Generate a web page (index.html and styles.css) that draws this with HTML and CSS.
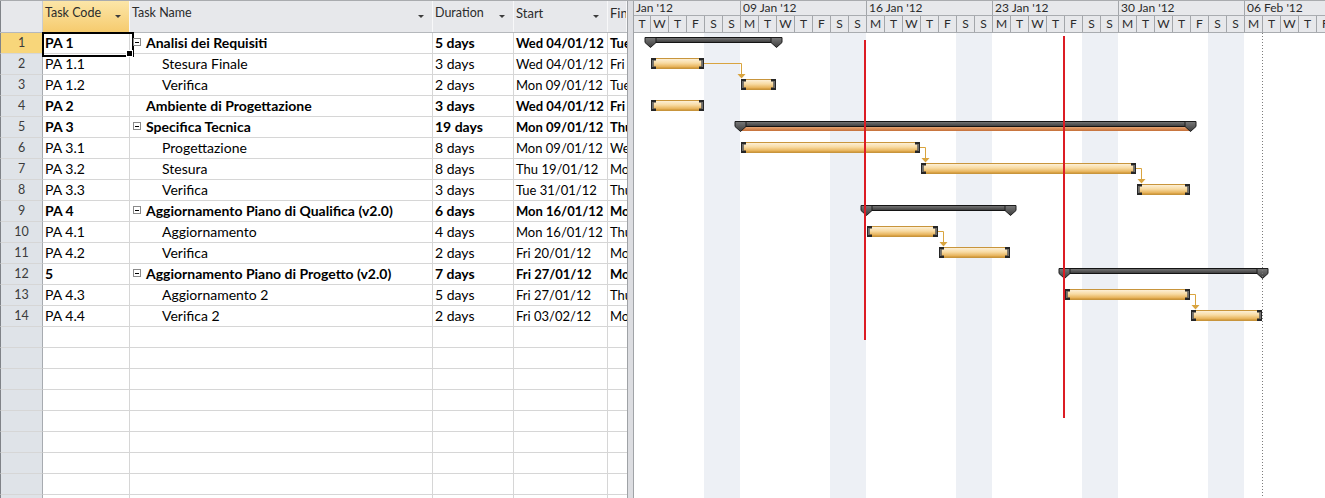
FILE: index.html
```html
<!DOCTYPE html>
<html>
<head>
<meta charset="utf-8">
<link rel="stylesheet" href="styles.css">
</head>
<body>
<div class="app">
  <div class="grid">
    <div class="row head">
      <div class="c num"></div>
      <div class="c hd sel"><span>Task Code</span><i class="dd"></i></div>
      <div class="c hd"><span>Task Name</span><i class="dd"></i></div>
      <div class="c hd"><span>Duration</span><i class="dd"></i></div>
      <div class="c hd"><span>Start</span><i class="dd"></i></div>
      <div class="c hd"><span>Finish</span></div>
    </div>
    <div class="row b">
      <div class="c num cur">1</div><div class="c code active">PA 1</div>
      <div class="c name"><i class="tog"></i>Analisi dei Requisiti</div>
      <div class="c">5 days</div><div class="c">Wed 04/01/12</div><div class="c">Tue 10/01/12</div>
    </div>
    <div class="row">
      <div class="c num">2</div><div class="c">PA 1.1</div>
      <div class="c name l2">Stesura Finale</div>
      <div class="c">3 days</div><div class="c">Wed 04/01/12</div><div class="c">Fri 06/01/12</div>
    </div>
    <div class="row">
      <div class="c num">3</div><div class="c">PA 1.2</div>
      <div class="c name l2">Verifica</div>
      <div class="c">2 days</div><div class="c">Mon 09/01/12</div><div class="c">Tue 10/01/12</div>
    </div>
    <div class="row b">
      <div class="c num">4</div><div class="c">PA 2</div>
      <div class="c name l1">Ambiente di Progettazione</div>
      <div class="c">3 days</div><div class="c">Wed 04/01/12</div><div class="c">Fri 06/01/12</div>
    </div>
    <div class="row b">
      <div class="c num">5</div><div class="c">PA 3</div>
      <div class="c name"><i class="tog"></i>Specifica Tecnica</div>
      <div class="c">19 days</div><div class="c">Mon 09/01/12</div><div class="c">Thu 02/02/12</div>
    </div>
    <div class="row">
      <div class="c num">6</div><div class="c">PA 3.1</div>
      <div class="c name l2">Progettazione</div>
      <div class="c">8 days</div><div class="c">Mon 09/01/12</div><div class="c">Wed 18/01/12</div>
    </div>
    <div class="row">
      <div class="c num">7</div><div class="c">PA 3.2</div>
      <div class="c name l2">Stesura</div>
      <div class="c">8 days</div><div class="c">Thu 19/01/12</div><div class="c">Mon 30/01/12</div>
    </div>
    <div class="row">
      <div class="c num">8</div><div class="c">PA 3.3</div>
      <div class="c name l2">Verifica</div>
      <div class="c">3 days</div><div class="c">Tue 31/01/12</div><div class="c">Thu 02/02/12</div>
    </div>
    <div class="row b">
      <div class="c num">9</div><div class="c">PA 4</div>
      <div class="c name"><i class="tog"></i>Aggiornamento Piano di Qualifica (v2.0)</div>
      <div class="c">6 days</div><div class="c">Mon 16/01/12</div><div class="c">Mon 23/01/12</div>
    </div>
    <div class="row">
      <div class="c num">10</div><div class="c">PA 4.1</div>
      <div class="c name l2">Aggiornamento</div>
      <div class="c">4 days</div><div class="c">Mon 16/01/12</div><div class="c">Thu 19/01/12</div>
    </div>
    <div class="row">
      <div class="c num">11</div><div class="c">PA 4.2</div>
      <div class="c name l2">Verifica</div>
      <div class="c">2 days</div><div class="c">Fri 20/01/12</div><div class="c">Mon 23/01/12</div>
    </div>
    <div class="row b">
      <div class="c num">12</div><div class="c">5</div>
      <div class="c name"><i class="tog"></i>Aggiornamento Piano di Progetto (v2.0)</div>
      <div class="c">7 days</div><div class="c">Fri 27/01/12</div><div class="c">Mon 06/02/12</div>
    </div>
    <div class="row">
      <div class="c num">13</div><div class="c">PA 4.3</div>
      <div class="c name l2">Aggiornamento 2</div>
      <div class="c">5 days</div><div class="c">Fri 27/01/12</div><div class="c">Thu 02/02/12</div>
    </div>
    <div class="row">
      <div class="c num">14</div><div class="c">PA 4.4</div>
      <div class="c name l2">Verifica 2</div>
      <div class="c">2 days</div><div class="c">Fri 03/02/12</div><div class="c">Mon 06/02/12</div>
    </div>
    <div class="row"><div class="c num"></div><div class="c"></div><div class="c"></div><div class="c"></div><div class="c"></div><div class="c"></div></div>
    <div class="row"><div class="c num"></div><div class="c"></div><div class="c"></div><div class="c"></div><div class="c"></div><div class="c"></div></div>
    <div class="row"><div class="c num"></div><div class="c"></div><div class="c"></div><div class="c"></div><div class="c"></div><div class="c"></div></div>
    <div class="row"><div class="c num"></div><div class="c"></div><div class="c"></div><div class="c"></div><div class="c"></div><div class="c"></div></div>
    <div class="row"><div class="c num"></div><div class="c"></div><div class="c"></div><div class="c"></div><div class="c"></div><div class="c"></div></div>
    <div class="row"><div class="c num"></div><div class="c"></div><div class="c"></div><div class="c"></div><div class="c"></div><div class="c"></div></div>
    <div class="row"><div class="c num"></div><div class="c"></div><div class="c"></div><div class="c"></div><div class="c"></div><div class="c"></div></div>
    <div class="row"><div class="c num"></div><div class="c"></div><div class="c"></div><div class="c"></div><div class="c"></div><div class="c"></div></div>
    <div class="row"><div class="c num"></div><div class="c"></div><div class="c"></div><div class="c"></div><div class="c"></div><div class="c"></div></div>
  </div>
  <div class="split"></div>
  <div class="gantt">
    <div class="tiers">
      <div class="tier top">
        <span>Jan '12</span><span>09 Jan '12</span><span>16 Jan '12</span><span>23 Jan '12</span><span>30 Jan '12</span><span>06 Feb '12</span>
      </div>
      <div class="tier bot">
        <span>T</span><span>W</span><span>T</span><span>F</span><span>S</span><span>S</span><span>M</span>
        <span>T</span><span>W</span><span>T</span><span>F</span><span>S</span><span>S</span><span>M</span>
        <span>T</span><span>W</span><span>T</span><span>F</span><span>S</span><span>S</span><span>M</span>
        <span>T</span><span>W</span><span>T</span><span>F</span><span>S</span><span>S</span><span>M</span>
        <span>T</span><span>W</span><span>T</span><span>F</span><span>S</span><span>S</span><span>M</span>
        <span>T</span><span>W</span><span>T</span><span>F</span>
      </div>
    </div>
    <svg class="chart" width="691" height="465" viewBox="0 0 691 465" xmlns="http://www.w3.org/2000/svg">
      <defs>
        <linearGradient id="tg" x1="0" y1="0" x2="0" y2="1">
          <stop offset="0" stop-color="#fdf2dc"/>
          <stop offset="0.45" stop-color="#f8dba3"/>
          <stop offset="0.8" stop-color="#e8b660"/>
          <stop offset="1" stop-color="#c98e2e"/>
        </linearGradient>
        <linearGradient id="sg" x1="0" y1="0" x2="0" y2="1">
          <stop offset="0" stop-color="#7a7a7a"/>
          <stop offset="1" stop-color="#3a3a3a"/>
        </linearGradient>
        <linearGradient id="og" x1="0" y1="0" x2="0" y2="1">
          <stop offset="0" stop-color="#f1b483"/>
          <stop offset="1" stop-color="#c46f38"/>
        </linearGradient>
        <g id="cl"><path d="M0 0H5V2.5H2.5V8.5H5V11H0Z" fill="#262626"/><rect x="1" y="2" width="1.5" height="7" fill="#6e6e6e"/></g>
        <g id="cr"><path d="M0 0H5V11H0V8.5H2.5V2.5H0Z" fill="#262626"/><rect x="2.5" y="2" width="1.5" height="7" fill="#6e6e6e"/></g>
        <path id="pt" d="M-5.5 0.5H5.5V5.5L0 10.5L-5.5 5.5Z" fill="url(#sg)" stroke="#1c1c1c"/>
      </defs>
      <g fill="#edf0f5">
        <rect x="70" y="0" width="36" height="465"/>
        <rect x="196" y="0" width="36" height="465"/>
        <rect x="322" y="0" width="36" height="465"/>
        <rect x="448" y="0" width="36" height="465"/>
        <rect x="574" y="0" width="36" height="465"/>
      </g>
      <g fill="none" stroke="#d9a43f">
        <path d="M70 30.5H107.5V41"/>
        <path d="M286 114.5H291.5V125"/>
        <path d="M502 135.5H507.5V146"/>
        <path d="M304 198.5H309.5V209"/>
        <path d="M556 261.5H561.5V272"/>
      </g>
      <g fill="#d9a43f">
        <path d="M103.5 41H111.5L107.5 45.5Z"/>
        <path d="M287.5 125H295.5L291.5 129.5Z"/>
        <path d="M503.5 146H511.5L507.5 150.5Z"/>
        <path d="M305.5 209H313.5L309.5 213.5Z"/>
        <path d="M557.5 272H565.5L561.5 276.5Z"/>
      </g>
      <g fill="url(#tg)" stroke="#c8953c">
        <rect x="17.5" y="25.5" width="52" height="10"/>
        <rect x="107.5" y="46.5" width="34" height="10"/>
        <rect x="17.5" y="67.5" width="52" height="10"/>
        <rect x="107.5" y="109.5" width="178" height="10"/>
        <rect x="287.5" y="130.5" width="214" height="10"/>
        <rect x="503.5" y="151.5" width="52" height="10"/>
        <rect x="233.5" y="193.5" width="70" height="10"/>
        <rect x="305.5" y="214.5" width="70" height="10"/>
        <rect x="431.5" y="256.5" width="124" height="10"/>
        <rect x="557.5" y="277.5" width="70" height="10"/>
      </g>
      <use href="#cl" x="17" y="25"/><use href="#cr" x="65" y="25"/>
      <use href="#cl" x="107" y="46"/><use href="#cr" x="137" y="46"/>
      <use href="#cl" x="17" y="67"/><use href="#cr" x="65" y="67"/>
      <use href="#cl" x="107" y="109"/><use href="#cr" x="281" y="109"/>
      <use href="#cl" x="287" y="130"/><use href="#cr" x="497" y="130"/>
      <use href="#cl" x="503" y="151"/><use href="#cr" x="551" y="151"/>
      <use href="#cl" x="233" y="193"/><use href="#cr" x="299" y="193"/>
      <use href="#cl" x="305" y="214"/><use href="#cr" x="371" y="214"/>
      <use href="#cl" x="431" y="256"/><use href="#cr" x="551" y="256"/>
      <use href="#cl" x="557" y="277"/><use href="#cr" x="623" y="277"/>
      <rect x="106" y="93" width="451" height="5" fill="url(#og)"/>
      <g fill="url(#sg)" stroke="#141414">
        <rect x="16.5" y="4.5" width="126" height="5"/>
        <rect x="106.5" y="88.5" width="450" height="5"/>
        <rect x="232.5" y="172.5" width="144" height="5"/>
        <rect x="430.5" y="235.5" width="198" height="5"/>
      </g>
      <use href="#pt" x="16.5" y="4"/><use href="#pt" x="142.5" y="4"/>
      <use href="#pt" x="106.5" y="88"/><use href="#pt" x="556.5" y="88"/>
      <use href="#pt" x="232.5" y="172"/><use href="#pt" x="376.5" y="172"/>
      <use href="#pt" x="430.5" y="235"/><use href="#pt" x="628.5" y="235"/>
      <rect x="230" y="7" width="2" height="300" fill="#dc1c24"/>
      <rect x="429" y="3" width="2" height="382" fill="#dc1c24"/>
      <line x1="628.5" y1="0" x2="628.5" y2="465" stroke="#7d7d7d" stroke-dasharray="1 2"/>
    </svg>
  </div>
</div>
</body>
</html>
```
FILE: styles.css
```css
* { box-sizing: border-box; margin: 0; padding: 0; }
html, body { width: 1325px; height: 498px; overflow: hidden; background: #fff; }
body { font-family: Lato, "Noto Sans", sans-serif; font-size: 14px; color: #000; }

.app { display: flex; height: 498px; border-top: 1px solid #a9abae; }

.grid { width: 628px; flex: none; overflow: hidden; border-right: 1px solid #9fa2a6; }
.row { display: grid; grid-template-columns: 43px 87px 303px 81px 94px 19px; height: 21px; }
.c { border-right: 1px solid #d6d6d6; border-bottom: 1px solid #d6d6d6; white-space: nowrap; overflow: hidden; line-height: 20px; padding-left: 2px; }
.c:last-child { border-right: none; }
.row .c:nth-child(5), .row .c:nth-child(6) { font-size: 13px; }
.b .c { font-weight: 700; }
.row .num { border-left: 1px solid #808388; border-right: 1px solid #a7abb0; background: #dfe3e8; text-align: center; color: #3b3b3b; padding: 0; font-weight: 400; font-size: 12.5px; }
.row .cur { background: #f8d67a; }

.row.head { height: 32px; border-bottom: 1px solid #b5b8bc; background: #e7e8eb; }
.head .c { border-bottom: none; border-right: 1px solid #f8f8f9; display: flex; justify-content: space-between; align-items: flex-start; padding: 4px 8px 0 2px; line-height: 16px; color: #2b2b2b; font-size: 12.5px; }
.head .num { background: #e7e8eb; border-right: 1px solid #c9ccd0; padding: 0; }
.head .sel { background: linear-gradient(#fce6a8, #f6cb6e); }
.dd { display: block; width: 0; height: 0; border-left: 3px solid transparent; border-right: 3px solid transparent; border-top: 3px solid #3c3c3c; margin-top: 10px; }

.active { position: relative; overflow: visible; }
.active::before { content: ""; position: absolute; left: -1px; top: -1px; width: 88px; height: 21px; border: 2px solid #000; }
.active::after { content: ""; position: absolute; left: 83px; top: 17px; width: 5px; height: 5px; background: #000; border: 1px solid #fff; }

.name { display: flex; align-items: center; padding-left: 3px; }
.name.l1 { padding-left: 16px; }
.name.l2 { padding-left: 32px; }
.tog { flex: none; position: relative; width: 8px; height: 8px; border: 1px solid #8a8a8a; background: #fff; margin-right: 5px; margin-top: -2px; }
.tog::after { content: ""; position: absolute; left: 1px; top: 2.5px; width: 4px; height: 1px; background: #000; }

.split { width: 6px; flex: none; background: #dcdde1; border-right: 1px solid #a0a3a7; }

.gantt { flex: 1; overflow: hidden; display: flex; flex-direction: column; }
.tiers { flex: none; height: 32px; background: #e7e8eb; border-bottom: 1px solid #a9acb0; }
.tier { display: flex; white-space: nowrap; overflow: hidden; font-size: 12px; color: #2b2b2b; }
.tier.top { height: 15px; border-bottom: 1px solid #a9acb0; }
.tier.bot { height: 16px; }
.top span { flex: none; width: 126px; border-right: 1px solid #a3a6aa; padding-left: 2px; line-height: 14px; }
.top span:first-child { width: 107px; }
.bot span { flex: none; width: 18px; border-right: 1px solid #a3a6aa; text-align: center; line-height: 16px; }
.bot span:first-child { width: 17px; }

.chart { display: block; flex: none; }
```
